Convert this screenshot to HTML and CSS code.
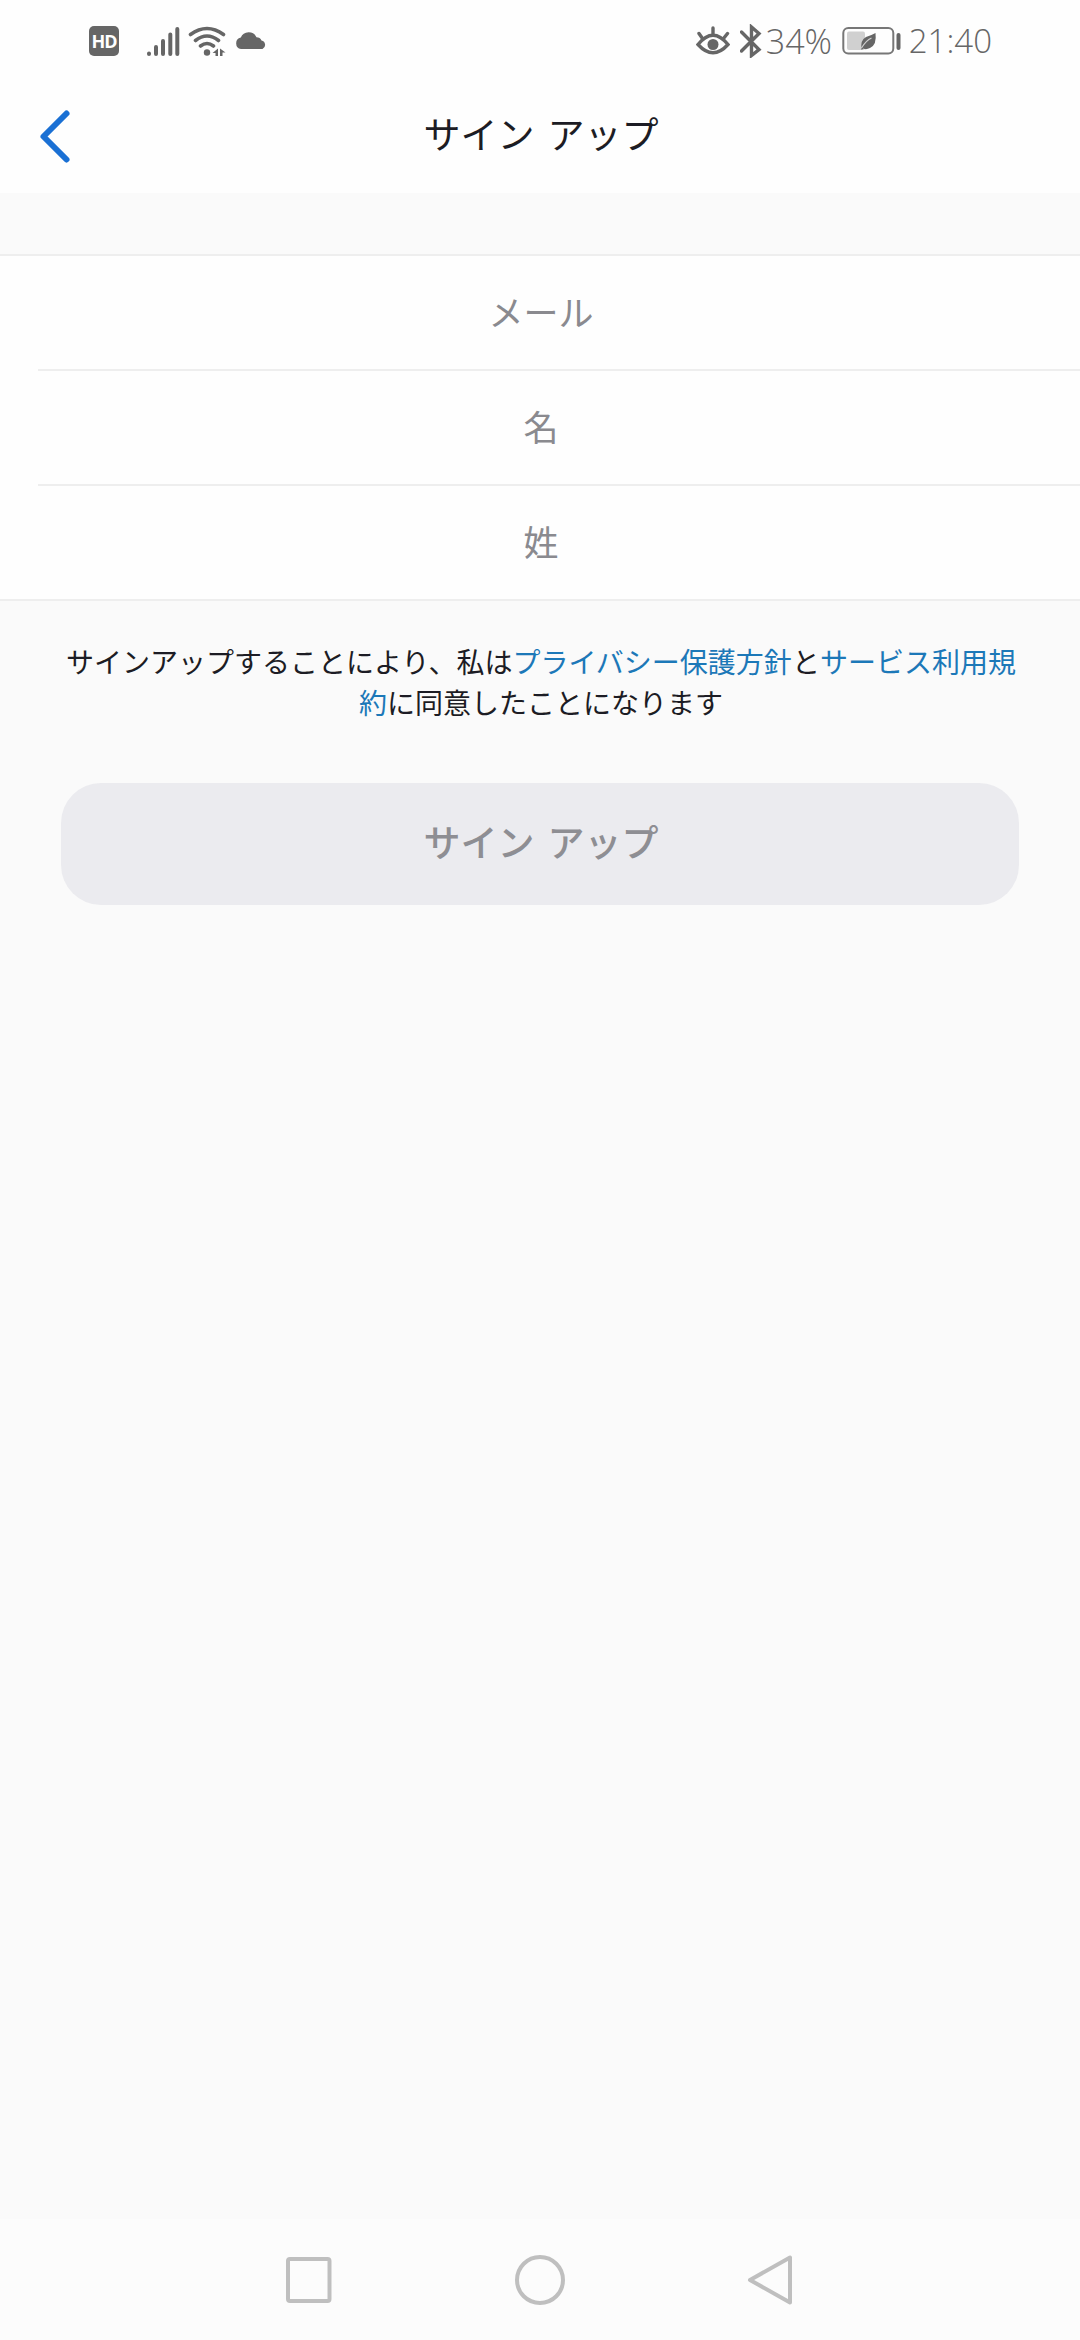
FILE: index.html
```
<!DOCTYPE html>
<html lang="ja">
<head>
  <meta charset="UTF-8" />
  <meta name="viewport" content="width=device-width, initial-scale=1.0" />
  <title>サイン アップ</title>
  <link rel="stylesheet" href="styles.css">
</head>
<body>
  <div class="status-bar">
    <div class="status-left">
      <span class="hd-badge">HD</span>
      <svg class="signal" width="34" height="32" viewBox="0 0 34 32">
        <path d="M3 28.5v.5M10 22v7M17 16v13M24.3 9.500v19.500M31.300 4v25" />
      </svg>
      <svg class="wifi" width="38" height="32" viewBox="0 0 38 32">
        <path class="wave" d="M2.500 9.500Q19 -2.500 35.500 9.500M7.500 15.500Q19 6.500 30.500 15.500M12.500 21Q19 16 25.500 21" />
        <circle cx="19" cy="27.500" r="3.200" />
        <path d="M30 23.500v7.500h-2.500v-3h-3zM32 23.500l5.500 4h-3v3.500h-2.500z" />
      </svg>
      <svg class="cloud" width="32" height="32" viewBox="0 0 32 32">
        <path d="M6 24a5.800 5.800 0 0 1-.2-11.400A8.500 8.500 0 0 1 21.500 12.300A5.500 5.500 0 0 1 26.500 15.500A4.500 4.500 0 0 1 27.500 24z" />
      </svg>
    </div>
    <div class="status-right">
      <svg class="eye" width="34" height="32" viewBox="0 0 34 32">
        <path d="M2 19.500Q17 1 32 19.500Q17 36 2 19.500zM3 8.500l3.500 5M17 3v6M31.500 8.500l-4 5" />
        <circle cx="17" cy="19.500" r="5.500" />
      </svg>
      <svg class="bluetooth" width="22" height="34" viewBox="0 0 22 34">
        <path d="M1.500 8L19 25.500L11.500 31.500V3L19 9.500L1.500 27" />
      </svg>
      <span class="percent">34%</span>
      <svg class="battery" width="60" height="30" viewBox="0 0 60 30">
        <rect class="shell" x="1.300" y="2" width="50" height="25.500" rx="5" />
        <rect class="level" x="5" y="5.500" width="18" height="18.500" rx="2" />
        <path class="leaf" d="M33.500 7Q35 19 28 22Q24 24 21.500 22.500L19.500 24Q18 14 24 11Q29 9.500 33.500 7z" />
        <path class="vein" d="M19.500 22Q24 14.500 29.500 12" />
        <rect class="tip" x="54.500" y="7" width="4" height="17" rx="2" />
      </svg>
      <span class="clock">21:40</span>
    </div>
  </div>

  <header class="navbar">
    <a href="#" class="back-button">
      <svg width="34" height="56" viewBox="0 0 34 56">
        <path d="M27.500 4.500L4.500 27.500L27.500 50.500" />
      </svg>
    </a>
    <h1>サイン アップ</h1>
  </header>

  <form class="signup-form">
    <div class="fields">
      <input type="text" placeholder="メール">
      <input type="text" placeholder="名">
      <input type="text" placeholder="姓">
    </div>
    <p class="terms">サインアップすることにより、私は<a href="#">プライバシー保護方針</a>と<a href="#">サービス利用規約</a>に同意したことになります</p>
    <button type="submit" class="signup-button" disabled>サイン アップ</button>
  </form>

  <nav class="system-nav">
    <svg width="52" height="52" viewBox="0 0 52 52"><rect x="5" y="5" width="41.500" height="42" rx="2" /></svg>
    <svg width="52" height="52" viewBox="0 0 52 52"><circle cx="26" cy="26" r="23" /></svg>
    <svg width="52" height="52" viewBox="0 0 52 52"><path d="M45 3.500v45L5 26z" /></svg>
  </nav>
</body>
</html>
```
FILE: styles.css
```
* {
  box-sizing: border-box;
}
body {
  margin: 0;
  height: 2340px;
  display: flex;
  flex-direction: column;
  font-family: Roboto, "Noto Sans CJK JP", sans-serif;
  background-color: #fafafa;
  color: #1c1c24;
}
svg {
  display: block;
  flex-shrink: 0;
}
.status-bar {
  display: flex;
  justify-content: space-between;
  height: 81px;
  padding: 0 88px 0 89px;
  background: #fefefe;
  color: #666;
}
.status-left,
.status-right {
  display: flex;
  align-items: center;
}
.status-bar svg {
  fill: #666;
}
.hd-badge {
  width: 30px;
  height: 30px;
  margin-right: 27px;
  border-radius: 5px;
  background: #666;
  color: #fff;
  font: bold 18px/31px "Open Sans", sans-serif;
  letter-spacing: -1px;
  text-align: center;
}
.status-bar .signal,
.status-bar .eye,
.status-bar .bluetooth {
  fill: none;
  stroke: #666;
  stroke-width: 4;
  stroke-linecap: round;
}
.signal {
  margin-right: 8px;
}
.wifi .wave {
  fill: none;
  stroke: #666;
  stroke-width: 3.6;
  stroke-linecap: round;
}
.wifi {
  margin-right: 9px;
}
.eye circle {
  fill: #666;
  stroke: none;
}
.status-bar .eye path,
.status-bar .bluetooth {
  stroke-width: 3.4;
}
.eye {
  margin-right: 10px;
}
.percent,
.clock {
  font: 300 33px/80px "Open Sans", sans-serif;
}
.percent {
  width: 69px;
  margin: 0 7px 0 4px;
  font-size: 34px;
}
.battery {
  margin-right: 7px;
}
.status-bar .battery .shell {
  fill: none;
  stroke: #777;
  stroke-width: 2;
}
.status-bar .battery .level {
  fill: #d0d0d0;
}
.status-bar .battery .vein {
  fill: none;
  stroke: #d0d0d0;
  stroke-width: 1.2;
}
.navbar {
  display: flex;
  align-items: center;
  height: 112px;
  padding: 0 39px;
  background: #fefefe;
}
.back-button {
  width: 34px;
}
.back-button path {
  fill: none;
  stroke: #1a70d4;
  stroke-width: 6;
  stroke-linecap: round;
  stroke-linejoin: round;
}
h1 {
  flex: 1;
  margin: 0 32px 0 0;
  font-size: 37px;
  font-weight: 400;
  line-height: 56px;
  word-spacing: 4px;
  text-align: center;
}
.fields {
  margin-top: 61px;
  border-top: 2px solid #eee;
  border-bottom: 2px solid #eee;
  background: #fefefe;
  padding-left: 38px;
}
.fields input {
  display: block;
  width: 100%;
  height: 115px;
  padding: 4px 36px 0 0;
  border: none;
  border-bottom: 2px solid #eee;
  background: none;
  font-family: inherit;
  font-size: 35px;
  text-align: center;
}
.fields input:last-child {
  border-bottom: none;
  height: 113px;
}
.fields input::placeholder {
  color: #8a8a8f;
}
.terms {
  margin: 42px 60px 0 62px;
  font-size: 28px;
  line-height: 41px;
  text-align: center;
}
.terms a {
  color: #1c78b8;
  text-decoration: none;
}
.signup-button {
  display: block;
  width: 958px;
  height: 122px;
  margin: 58px auto 0;
  padding: 0 0 6px 2px;
  border: none;
  border-radius: 40px;
  background: #ebebef;
  color: #8e8e93;
  font-family: inherit;
  font-size: 37px;
  font-weight: 500;
  word-spacing: 4px;
}
.system-nav {
  display: flex;
  justify-content: center;
  align-items: center;
  gap: 179px;
  height: 121px;
  margin-top: auto;
  background: #fcfcfc;
}
.system-nav svg {
  fill: none;
  stroke: #bfbfbf;
  stroke-width: 4;
  stroke-linejoin: round;
}
```
